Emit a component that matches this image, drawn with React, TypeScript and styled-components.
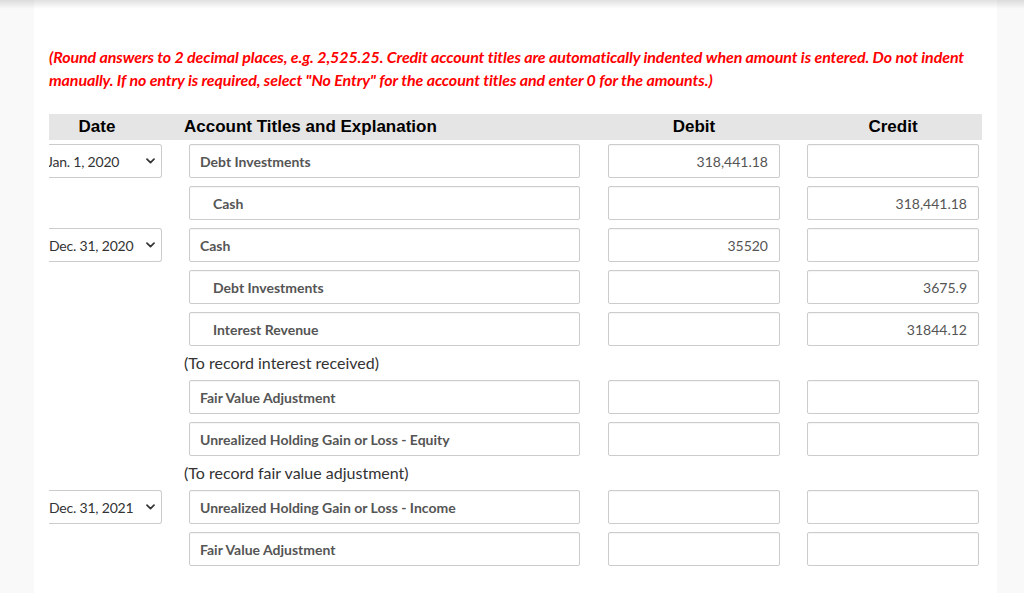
import { FunctionComponent } from "react";
import styled, { createGlobalStyle } from "styled-components";

const GlobalStyle = createGlobalStyle`
  html, body {
    margin: 0;
    padding: 0;
    background: #f9f9f9;
  }
  body {
    font-family: Lato, "Open Sans", Arial, sans-serif;
    color: #333;
  }
`;

const Page = styled.div`
  position: relative;
  min-height: 593px;
  display: flex;
  justify-content: flex-start;
  padding: 0 27px 0 34px;
  &::before {
    content: "";
    position: absolute;
    left: 0;
    right: 0;
    top: 0;
    height: 9px;
    background: linear-gradient(rgba(0, 0, 0, 0.12), rgba(0, 0, 0, 0));
    pointer-events: none;
  }
`;

const Panel = styled.div`
  width: 963px;
  min-height: 593px;
  box-sizing: border-box;
  background: #fff;
  padding: 45px 15px 0 15px;
`;

const Instructions = styled.p`
  margin: 0 0 23px;
  color: #ff0000;
  font-style: italic;
  font-weight: 700;
  font-size: 16px;
  line-height: 23px;
  letter-spacing: -0.1px;
  max-width: 925px;
`;

const Table = styled.div`
  display: flex;
  flex-direction: column;
  gap: 8px;
  overflow: hidden;
`;

const Columns = styled.div`
  display: grid;
  grid-template-columns: 140px 391px 28px 172px 27px 172px;
  align-items: center;
`;

const HeaderRow = styled(Columns)`
  height: 26px;
  background: #e5e5e5;
  margin-bottom: -4px;
  font-family: "Liberation Sans", Arial, sans-serif;
  font-weight: 700;
  font-size: 17px;
  color: #000;
`;

const HeadCell = styled.div<{ $col: number; $align?: string; $shift?: number }>`
  grid-column: ${(p) => p.$col};
  text-align: ${(p) => p.$align || "center"};
  margin-left: ${(p) => p.$shift || 0}px;
  white-space: nowrap;
`;

const DateHead = styled(HeadCell)`
  padding-right: 44px;
`;

const EntryRow = styled(Columns)`
  height: 34px;
`;

const DateSelect = styled.div`
  grid-column: 1;
  width: 113px;
  height: 34px;
  box-sizing: border-box;
  border: 1px solid #ccc;
  border-left: none;
  border-radius: 0 3px 3px 0;
  display: flex;
  align-items: center;
  justify-content: space-between;
  padding: 0 6px 0 0;
  font-size: 14px;
  letter-spacing: -0.2px;
  color: #333;
  white-space: nowrap;
`;

const DateText = styled.span<{ $clip?: boolean }>`
  margin-left: ${(p) => (p.$clip ? -2 : 0)}px;
`;

const Field = styled.div<{ $col: number; $indent?: boolean; $right?: boolean }>`
  grid-column: ${(p) => p.$col};
  height: 34px;
  box-sizing: border-box;
  border: 1px solid #ccc;
  border-radius: 2px;
  box-shadow: inset 0 1px 1px rgba(0, 0, 0, 0.04);
  display: flex;
  align-items: center;
  justify-content: ${(p) => (p.$right ? "flex-end" : "flex-start")};
  padding: 0 ${(p) => (p.$right ? 11 : 10)}px 0
    ${(p) => (p.$indent ? 23 : 10)}px;
  font-size: 14px;
  color: #555;
  font-weight: ${(p) => (p.$right ? 400 : 700)};
  white-space: nowrap;
`;

const Explanation = styled(Columns)`
  height: 18px;
  font-size: 16px;
  line-height: 18px;
  color: #333;
`;

const ExplanationText = styled.div`
  grid-column: 2 / span 5;
  margin-left: -5px;
`;

const Chevron = () => (
  <svg width="9" height="6" viewBox="0 0 9 6" fill="none">
    <path
      d="M1 1.2 L4.5 4.6 L8 1.2"
      stroke="#333"
      strokeWidth="1.7"
      strokeLinecap="round"
      strokeLinejoin="round"
    />
  </svg>
);

type Entry =
  | { kind: "row"; date?: string; account: string; indent?: boolean; debit?: string; credit?: string }
  | { kind: "note"; text: string };

const entries: Entry[] = [
  { kind: "row", date: "Jan. 1, 2020", account: "Debt Investments", debit: "318,441.18" },
  { kind: "row", account: "Cash", indent: true, credit: "318,441.18" },
  { kind: "row", date: "Dec. 31, 2020", account: "Cash", debit: "35520" },
  { kind: "row", account: "Debt Investments", indent: true, credit: "3675.9" },
  { kind: "row", account: "Interest Revenue", indent: true, credit: "31844.12" },
  { kind: "note", text: "(To record interest received)" },
  { kind: "row", account: "Fair Value Adjustment" },
  { kind: "row", account: "Unrealized Holding Gain or Loss - Equity" },
  { kind: "note", text: "(To record fair value adjustment)" },
  { kind: "row", date: "Dec. 31, 2021", account: "Unrealized Holding Gain or Loss - Income" },
  { kind: "row", account: "Fair Value Adjustment" },
];

const App: FunctionComponent = () => {
  return (
    <Page>
      <GlobalStyle />
      <Panel>
        <Instructions>
          (Round answers to 2 decimal places, e.g. 2,525.25. Credit account titles are
          automatically indented when amount is entered. Do not indent manually. If no entry
          is required, select "No Entry" for the account titles and enter 0 for the amounts.)
        </Instructions>
        <Table>
          <HeaderRow>
            <DateHead $col={1}>Date</DateHead>
            <HeadCell $col={2} $align="left" $shift={-5}>
              Account Titles and Explanation
            </HeadCell>
            <HeadCell $col={4}>Debit</HeadCell>
            <HeadCell $col={6}>Credit</HeadCell>
          </HeaderRow>
          {entries.map((e, i) =>
            e.kind === "note" ? (
              <Explanation key={i}>
                <ExplanationText>{e.text}</ExplanationText>
              </Explanation>
            ) : (
              <EntryRow key={i}>
                {e.date && (
                  <DateSelect>
                    <DateText $clip={e.date.startsWith("Jan")}>{e.date}</DateText>
                    <Chevron />
                  </DateSelect>
                )}
                <Field $col={2} $indent={e.indent}>
                  {e.account}
                </Field>
                <Field $col={4} $right>
                  {e.debit}
                </Field>
                <Field $col={6} $right>
                  {e.credit}
                </Field>
              </EntryRow>
            )
          )}
        </Table>
      </Panel>
    </Page>
  );
};

export default App;
